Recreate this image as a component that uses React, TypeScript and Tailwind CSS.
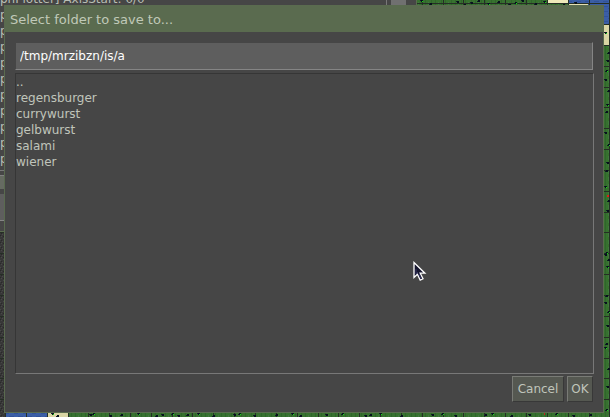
import { useState } from "react";

const folders = ["..", "regensburger", "currywurst", "gelbwurst", "salami", "wiener"];

const columns = [5, 26, 47, 68, 88, 109, 130, 151, 172, 192, 213, 234, 255, 276, 297, 318, 338, 359, 380, 401, 422, 443, 463, 484, 505, 526, 547, 568, 589, 609];
const rows = [3, 24, 45, 66, 87, 107, 128, 149, 170, 191, 212, 232, 253, 274, 295, 316, 337, 358, 378, 399];

const topTrees = [421, 430, 457, 464, 471, 478, 488, 498, 509, 515, 522, 535, 544, 563, 575];
const bottomTrees = [52, 57, 90, 93, 110, 121, 138, 156, 162, 172, 178, 187, 198, 213, 234, 239, 254, 276, 292, 300, 326, 342, 365, 370, 380, 401, 432, 442, 455, 485, 492, 511, 529, 556, 573, 590];
const rightTrees = [32, 52, 60, 70, 79, 90, 104, 111, 132, 144, 162, 170, 186, 200, 210, 252, 254, 259, 266, 295, 302, 311, 325, 343, 347, 368, 386, 409];

function Trees({ points }: { points: number[][] }) {
  return (
    <>
      {points.map(([x, y], i) => (
        <g key={i}>
          <rect x={x} y={y} width="2" height="2" fill="#07101d" />
          <rect x={x - 1} y={y + (i % 2)} width="1" height="1" fill="#101c28" />
          {i % 3 === 0 && <rect x={x + 1} y={y + 1} width="1" height="1" fill="#11e312" />}
        </g>
      ))}
    </>
  );
}

function WorldMap() {
  return (
    <svg className="absolute left-0 top-0" width="610" height="417" shapeRendering="crispEdges" aria-hidden="true">
      <defs>
        <pattern id="grass" width="10" height="7" patternUnits="userSpaceOnUse">
          <rect width="10" height="7" fill="#37712f" />
          <path d="M1.5 0v7M5.5 0v7" stroke="#2f652b" />
          <path d="M8.5 2v4" stroke="#417940" />
        </pattern>
        <pattern id="water" width="9" height="5" patternUnits="userSpaceOnUse">
          <rect width="9" height="5" fill="#3b5ea5" />
          <path d="M0 1.5h5M5 3.5h4" stroke="#31529a" />
        </pattern>
        <pattern id="rock" width="5" height="7" patternUnits="userSpaceOnUse">
          <rect width="5" height="7" fill="#373737" />
          <path d="M0 1.5h1M2 3.5h1M3 0.5h1M1 5.5h1" stroke="#484848" />
          <path d="M1 2.5h1M0 4.5h1M3 5.5h1" stroke="#292929" />
        </pattern>
      </defs>
      <rect width="610" height="417" fill="url(#grass)" />
      <rect width="5" height="417" fill="url(#rock)" />
      <rect x="6" y="400" width="41" height="17" fill="url(#water)" />
      <rect x="48" y="400" width="20" height="17" fill="#d9d5a4" />
      <rect x="547" width="21" height="4" fill="#eee8b9" />
      <rect x="568" width="42" height="24" fill="url(#water)" />
      <rect x="568" y="4" width="20" height="2" fill="#e4dfb2" />
      <rect x="603" y="25" width="7" height="20" fill="#d9d5a4" />
      {columns.map((x) => <rect key={x} x={x} width="1" height="417" fill="#252e25" />)}
      {rows.map((y) => <rect key={y} y={y} width="610" height="1" fill="#252e25" />)}
      <Trees points={topTrees.map((x, i) => [x, (i * 3) % 5])} />
      <Trees points={bottomTrees.map((x, i) => [x, 413 + ((i * 2) % 3)])} />
      <Trees points={rightTrees.map((y, i) => [605 + ((i * 3) % 4), y])} />
      <rect x="607" y="195" width="2" height="2" fill="#e01e18" />
      <rect x="544" y="413" width="1" height="2" fill="#c82020" />
    </svg>
  );
}

function LogWindow() {
  return (
    <div className="absolute left-0 top-0 h-[232px] w-[417px] overflow-hidden border-b border-r border-[#5a6b4f] bg-[#464646]" aria-hidden="true">
      <div className="-mt-[9px] h-[180px] border-b border-[#787878] leading-4 text-[#b9beb4]">
        <div>phPlotter] AxisStart: 0/0</div>
        {Array.from({ length: 10 }, (_, i) => <div key={i}>p</div>)}
      </div>
      <div className="mt-1 h-3.5 border-t border-[#808080] bg-[#666b62]" />
      <div className="mt-[5px] h-[27px] border-b border-[#858585] bg-[#5e5e5e]" />
      <div className="absolute left-[386px] top-0 h-40 w-5 border-l border-[#787878] pl-1">
        <div className="h-full bg-[#707070]" />
      </div>
    </div>
  );
}

function Pointer() {
  return (
    <svg className="pointer-events-none absolute left-[413px] top-[261px]" width="14" height="22" viewBox="0 0 14 22" aria-hidden="true">
      <path d="M1 1.5v15l3.4-3.2 2.8 5.8 2.8-1.3-2.8-5.6h4.7z" fill="#15152d" stroke="#fff" strokeWidth="1.3" />
      <path d="M3 8v5l2-2M6 13l2 5" stroke="#34345f" fill="none" />
    </svg>
  );
}

const buttonStyle = "h-[26px] border border-b-[#383838] border-l-[#797b76] border-r-[#383838] border-t-[#797b76] bg-[#555851] text-center text-[#c0c5bb]";

export default function App() {
  const [path, setPath] = useState("/tmp/mrzibzn/is/a");
  return (
    <div className="relative h-screen overflow-hidden pb-1 pl-1 pr-1.5 pt-[5px] font-['DejaVu_Sans',sans-serif] text-[12px] leading-4">
      <WorldMap />
      <LogWindow />
      <div role="dialog" aria-labelledby="title" className="relative flex h-full flex-col border border-[#5a6b4f] bg-[#464646]">
        <h1 id="title" className="flex h-[26px] items-end bg-[#5a6b4f] px-[5px] pb-1 text-[13px] leading-4 text-[#c0c9b8]">Select folder to save to...</h1>
        <div className="flex min-h-0 flex-1 flex-col pb-2.5 pl-2.5 pr-[9px] pt-2.5">
          <div className="mb-[3px] mr-px flex">
            <input
              aria-label="Folder path"
              value={path}
              onChange={(e) => setPath(e.target.value)}
              className="h-7 min-w-0 flex-1 border border-b-[#858585] border-l-[#464646] border-r-[#858585] border-t-[#464646] bg-[#5e5e5e] px-1 text-white outline-none"
            />
          </div>
          <ul className="min-h-0 flex-1 border border-b-[#787878] border-l-[#363636] border-r-[#787878] border-t-[#363636] text-[#c0c5bb]">
            {folders.map((name) => (
              <li key={name}>
                <button className="block w-full text-left" onClick={() => setPath(name)}>{name}</button>
              </li>
            ))}
          </ul>
          <div className="mr-px mt-0.5 flex justify-end gap-[3px]">
            <button className={`${buttonStyle} w-[52px]`}>Cancel</button>
            <button className={`${buttonStyle} w-[26px]`}>OK</button>
          </div>
        </div>
      </div>
      <Pointer />
    </div>
  );
}
